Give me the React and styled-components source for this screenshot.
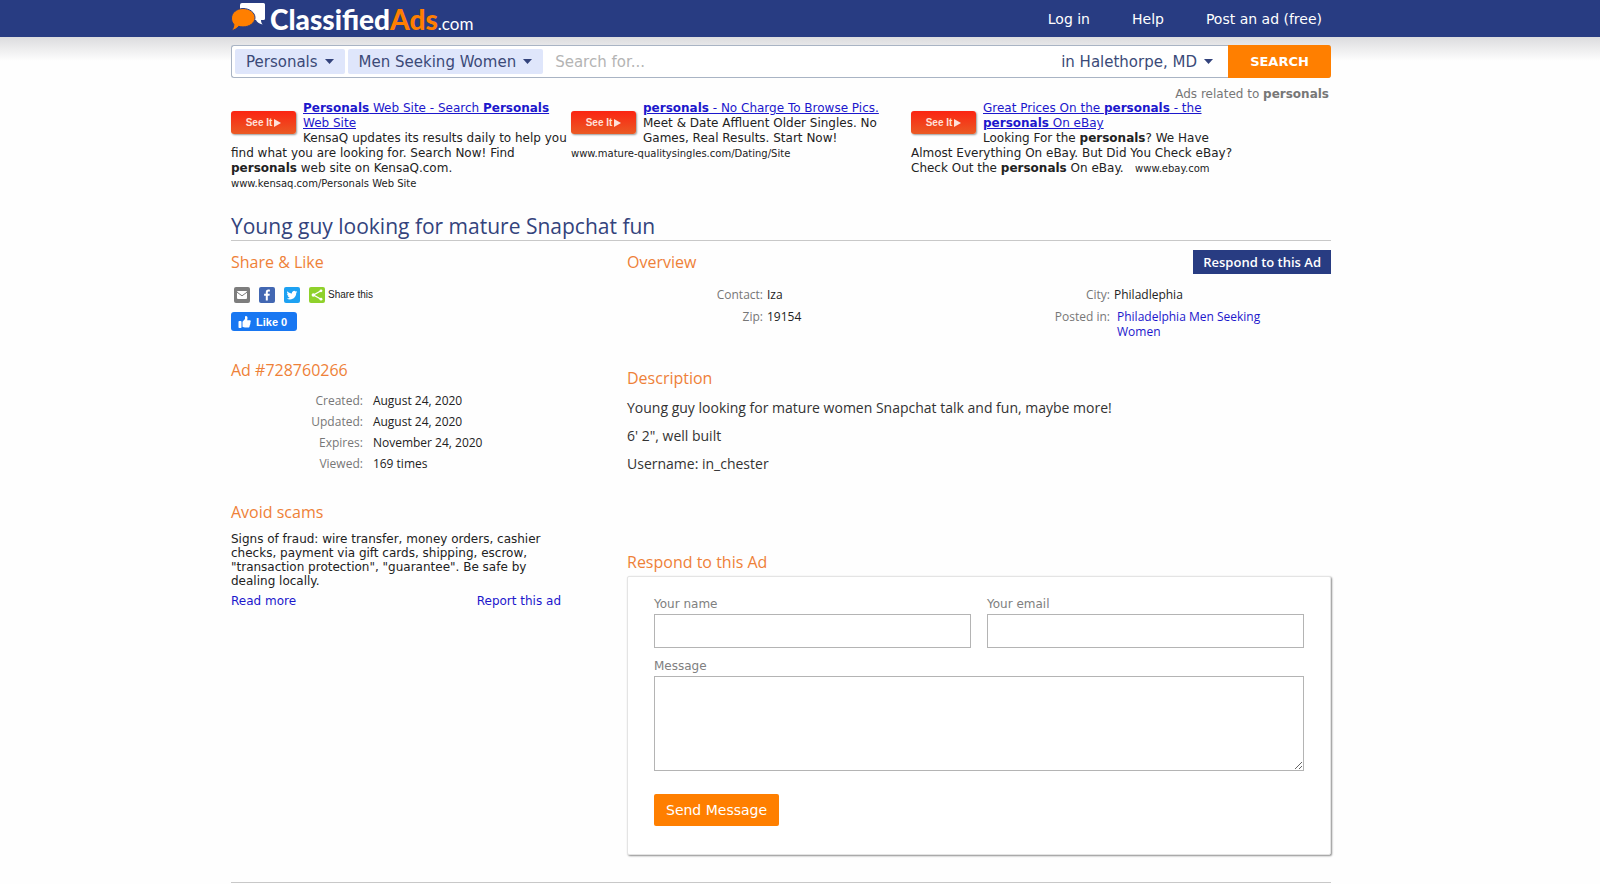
import React, { useState } from 'react';
import styled, { createGlobalStyle } from 'styled-components';

const verdana = '"DejaVu Sans", Verdana, sans-serif';
const openSans = '"Open Sans", "Noto Sans", sans-serif';

const GlobalStyle = createGlobalStyle`
  * {
    box-sizing: border-box;
  }

  body {
    margin: 0;
    background-color: #fefefe;
    color: #222222;
    font-family: ${verdana};
    font-size: 12px;
    line-height: 14px;
  }

  a {
    color: #1c17cc;
    text-decoration: none;
  }
`;

const Shell = styled.div`
  width: 100%;
  max-width: 1138px;
  margin: 0 auto;
  padding-right: 38px;
`;

const Header = styled.header`
  background-color: #283c82;
`;

const HeaderRow = styled(Shell)`
  display: flex;
  align-items: center;
  justify-content: space-between;
  height: 37px;
`;

const Logo = styled.a`
  display: flex;
  align-items: baseline;
  padding-top: 5px;
  color: #ffffff;
  font-family: Lato, sans-serif;
  font-size: 28px;
  font-weight: 900;
  line-height: 33px;

  svg {
    align-self: flex-start;
    margin-right: 4px;
  }
`;

const LogoAccent = styled.span`
  color: #ff7f00;
`;

const LogoSuffix = styled.span`
  font-size: 17px;
  font-weight: 400;
`;

const Nav = styled.nav`
  display: flex;
  gap: 42px;
  padding-right: 9px;

  a {
    color: #ffffff;
    font-size: 14px;
    line-height: 20px;
  }
`;

const SearchArea = styled.div`
  padding-top: 8px;
  background: linear-gradient(#dcdcde, #fefefe 24px);
`;

const SearchForm = styled.form`
  display: flex;
  height: 33px;
  border: 1px solid #a9b4c4;
  border-right: none;
  border-radius: 3px;
  background-color: #ffffff;
`;

const Picker = styled.label`
  position: relative;
  display: flex;
  align-items: center;
  margin: ${({ $plain }) => ($plain ? '0' : '3px 0 3px 3px')};
  border-radius: 2px;
  background-color: ${({ $plain }) => ($plain ? 'transparent' : '#dfe6fb')};

  svg {
    position: absolute;
    right: ${({ $plain }) => ($plain ? '15px' : '11px')};
    pointer-events: none;
  }
`;

const PickerSelect = styled.select`
  appearance: none;
  field-sizing: content;
  height: 100%;
  padding: 0 ${({ $plain }) => ($plain ? '31px' : '27px')} 0 11px;
  border: none;
  background: transparent;
  color: #3b4a78;
  font-family: ${verdana};
  font-size: 15px;
`;

const SearchInput = styled.input`
  flex: 1;
  min-width: 0;
  padding: 0 12px;
  border: none;
  background: transparent;
  font-family: ${verdana};
  font-size: 15px;

  &::placeholder {
    color: #b4b4b4;
  }
`;

const SearchButton = styled.button`
  width: 103px;
  margin: -1px 0;
  border: none;
  border-radius: 0 3px 3px 0;
  background-color: #ff7f00;
  color: #ffffff;
  font-family: ${verdana};
  font-size: 13px;
  font-weight: bold;
  cursor: pointer;
`;

const AdsLabel = styled.p`
  margin: 9px 2px 0 0;
  color: #777777;
  text-align: right;
`;

const AdsRow = styled.div`
  display: grid;
  grid-template-columns: repeat(3, 338fr) 80fr;
  gap: 2px;
  min-height: 111px;
`;

const SponsoredAd = styled.div`
  line-height: 15px;

  a {
    text-decoration: underline;
  }
`;

const SeeItButton = styled.button`
  float: left;
  display: flex;
  align-items: center;
  justify-content: center;
  gap: 2px;
  width: 65px;
  height: 23px;
  margin: 10px 7px 6px 0;
  padding: 0;
  border: none;
  border-radius: 3px;
  background: linear-gradient(#fb2412, #ea5a24);
  box-shadow: 1px 1px 2px rgba(0, 0, 0, 0.4);
  color: #ffe1d8;
  font-family: "Liberation Sans", Arial, sans-serif;
  font-size: 10px;
  font-weight: bold;
  cursor: pointer;
`;

const AdUrl = styled.span`
  display: inline-block;
  font-size: 10px;
  white-space: nowrap;
`;

const Title = styled.h1`
  margin: 0;
  border-bottom: 1px solid #c8c8c8;
  color: #33437c;
  font-family: ${openSans};
  font-size: 21px;
  font-weight: 400;
  line-height: 28px;
`;

const Columns = styled.main`
  display: grid;
  grid-template-columns: 30% 64%;
  justify-content: space-between;
  padding: 9px 0 27px;
  border-bottom: 1px solid #c8c8c8;
`;

const Heading = styled.h2`
  margin: 0;
  color: #ee8138;
  font-family: ${openSans};
  font-size: 16px;
  font-weight: 400;
  line-height: 24px;
`;

const HeadingRow = styled.div`
  display: flex;
  align-items: center;
  justify-content: space-between;
`;

const Section = styled.section`
  min-height: ${({ $minHeight }) => $minHeight || 0}px;
`;

const ShareRow = styled.div`
  display: flex;
  align-items: center;
  gap: 9px;
  margin: 13px 0 9px 3px;
`;

const ShareLink = styled.a`
  display: flex;
  align-items: center;
  gap: 3px;
  color: #222222;
  font-family: "Liberation Sans", Arial, sans-serif;
  font-size: 10px;
`;

const LikeButton = styled.button`
  display: flex;
  align-items: center;
  gap: 5px;
  height: 19px;
  padding: 0 10px 0 7px;
  border: none;
  border-radius: 3px;
  background-color: #1877f2;
  color: #ffffff;
  font-family: "Liberation Sans", Arial, sans-serif;
  font-size: 11px;
  font-weight: bold;
  cursor: pointer;
`;

const DetailTable = styled.table`
  width: 100%;
  margin-top: 8px;
  border-collapse: collapse;
  font-family: ${openSans};
  font-size: 12px;
  line-height: 15px;

  th,
  td {
    padding: 3px 0;
    font-weight: 400;
    text-align: left;
    vertical-align: top;
  }

  th {
    width: 43%;
    padding-right: 10px;
    color: #777777;
    text-align: right;
  }
`;

const OverviewList = styled.dl`
  display: grid;
  grid-template-columns: 136px 1fr 136px 217px;
  gap: 7px 4px;
  margin: 13px 0 0;
  font-family: ${openSans};
  font-size: 12px;
  line-height: 15px;

  dt {
    color: #777777;
    text-align: right;
  }

  dd {
    margin: 0;
  }

  dd a {
    display: block;
    max-width: 160px;
    padding-left: 3px;
  }
`;

const RespondLink = styled.a`
  padding: 2px 10px;
  background-color: #283c82;
  color: #ffffff;
  font-family: ${openSans};
  font-size: 13px;
  font-weight: 600;
  line-height: 20px;
`;

const ScamText = styled.p`
  margin: 8px 0 6px;
`;

const LinkRow = styled.div`
  display: flex;
  justify-content: space-between;
`;

const Paragraph = styled.p`
  margin: 8px 0;
  color: #333333;
  font-family: ${openSans};
  font-size: 14px;
  line-height: 20px;
`;

const MessageForm = styled.form`
  display: grid;
  grid-template-columns: 1fr 1fr;
  gap: 11px 16px;
  margin-top: 2px;
  padding: 20px 26px 28px;
  border: 1px solid #e4e4e4;
  border-radius: 2px;
  background-color: #ffffff;
  box-shadow: 1px 1px 2px rgba(0, 0, 0, 0.45);
`;

const Field = styled.label`
  display: flex;
  flex-direction: column;
  gap: 3px;
  grid-column: ${({ $wide }) => ($wide ? '1 / -1' : 'auto')};
  color: #808080;
`;

const TextInput = styled.input`
  width: 100%;
  height: 34px;
  padding: 0 8px;
  border: 1px solid #b4b4b4;
  font-family: ${verdana};
  font-size: 14px;
`;

const TextArea = styled.textarea`
  width: 100%;
  height: 95px;
  padding: 8px;
  border: 1px solid #b4b4b4;
  font-family: ${verdana};
  font-size: 14px;
  resize: vertical;
`;

const SendButton = styled.button`
  justify-self: start;
  height: 32px;
  margin-top: 12px;
  padding: 0 12px;
  border: none;
  border-radius: 2px;
  background-color: #ff7f00;
  color: #ffffff;
  font-family: ${verdana};
  font-size: 14px;
  cursor: pointer;
`;

const LogoMark = () => (
  <svg width="35" height="31" viewBox="0 0 35 31" aria-hidden="true">
    <path fill="#ffffff" d="M11 0h21.500q1.500 0 1.500 1.500v14q0 1.500-1.500 1.500H30c0 2 .5 3 1.600 4.500C28 20.500 26 19 25 17H9V2q0-2 2-2z" />
    <path fill="#ff7f00" stroke="#283c82" strokeWidth="1" d="M12 5.500c6.500 0 12 4 12 9.200s-5.500 9.200-12 9.200c-1.500 0-3-.2-4.300-.6C6 25.500 3.500 27 .500 27.500c1.600-1.700 2.400-3.800 2.300-6.200C1.200 19.700.500 17.500.500 15c0-5 5-9.500 11.500-9.500z" />
  </svg>
);

const Caret = () => (
  <svg width="9" height="5" viewBox="0 0 9 5" aria-hidden="true">
    <path fill="#33437c" d="M0 0h9L4.500 5z" />
  </svg>
);

const MailIcon = () => (
  <svg width="16" height="16" viewBox="0 0 16 16" aria-hidden="true">
    <rect width="16" height="16" rx="2" fill="#7d7d7d" />
    <rect x="3" y="4" width="10" height="8" rx="1" fill="#ffffff" />
    <path d="M3 5.200l5 3.600 5-3.600" fill="none" stroke="#7d7d7d" strokeWidth="1" />
  </svg>
);

const FacebookIcon = () => (
  <svg width="16" height="16" viewBox="0 0 16 16" aria-hidden="true">
    <rect width="16" height="16" rx="2" fill="#4267b2" />
    <path fill="#ffffff" d="M8.800 13.500V8.700h1.700l.3-2H8.800V5.500c0-.6.3-1 1.100-1h1V2.700c-.3 0-.9-.1-1.500-.1-1.600 0-2.600.9-2.600 2.600v1.500H5.100v2h1.700v4.800z" />
  </svg>
);

const TwitterIcon = () => (
  <svg width="16" height="16" viewBox="0 0 16 16" aria-hidden="true">
    <rect width="16" height="16" rx="2" fill="#1da1f2" />
    <path fill="#ffffff" d="M13.300 4.900c-.4.200-.8.300-1.200.3.400-.3.800-.7.900-1.200-.4.200-.9.400-1.400.5a2.200 2.200 0 0 0-3.700 2C6.100 6.400 4.400 5.500 3.400 4.200c-.6 1-.3 2.200.7 2.900-.4 0-.7-.1-1-.3 0 1 .7 2 1.700 2.200-.3.100-.6.100-1 0 .3.900 1.100 1.500 2.100 1.500-.9.700-2 1-3.200.9 1 .6 2.100 1 3.300 1 4.100 0 6.300-3.400 6.200-6.400.4-.3.800-.7 1.100-1.100z" />
  </svg>
);

const ShareIcon = () => (
  <svg width="16" height="16" viewBox="0 0 16 16" aria-hidden="true">
    <rect width="16" height="16" rx="2" fill="#8fd12b" />
    <path d="M12 3.800L4.500 8l7.500 4.200" fill="none" stroke="#ffffff" strokeWidth="1.300" />
    <circle cx="12" cy="3.800" r="1.400" fill="#ffffff" />
    <circle cx="4.300" cy="8" r="1.700" fill="#ffffff" />
    <circle cx="12" cy="12.200" r="1.400" fill="#ffffff" />
  </svg>
);

const ThumbIcon = () => (
  <svg width="13" height="12" viewBox="0 0 13 12" aria-hidden="true">
    <path fill="#ffffff" d="M1.300 5h1.400q.8 0 .8.800v5.400q0 .8-.8.800H1.300q-.8 0-.8-.8V5.800q0-.8.800-.8zM4.500 5.800L7 3V1.200C7 .5 7.400 0 8 0c1 0 1.600 1 1.500 2.100L9.200 4.200h2.400c1.200 0 1.600 1.400.7 2 .5.600.3 1.500-.3 1.800.4.600.1 1.400-.5 1.700.3.800-.2 1.800-1.300 1.800H7c-1 0-1.600-.2-2.500-.8z" />
  </svg>
);

const PlayIcon = () => (
  <svg width="7" height="8" viewBox="0 0 7 8" aria-hidden="true">
    <path fill="#ffe1d8" d="M0 0l7 4-7 4z" />
  </svg>
);

const adDetails = [
  ['Created:', 'August 24, 2020'],
  ['Updated:', 'August 24, 2020'],
  ['Expires:', 'November 24, 2020'],
  ['Viewed:', '169 times'],
];

const sponsoredAds = [
  {
    title: <><b>Personals</b> Web Site - Search <b>Personals</b> Web Site</>,
    text: <>KensaQ updates its results daily to help you find what you are looking for. Search Now! Find <b>personals</b> web site on KensaQ.com.</>,
    url: 'www.kensaq.com/Personals Web Site',
  },
  {
    title: <><b>personals</b> - No Charge To Browse Pics.</>,
    text: 'Meet & Date Affluent Older Singles. No Games, Real Results. Start Now!',
    url: 'www.mature-qualitysingles.com/Dating/Site',
  },
  {
    title: <>Great Prices On the <b>personals</b> - the <b>personals</b> On eBay</>,
    text: <>Looking For the <b>personals</b>? We Have Almost Everything On eBay. But Did You Check eBay? Check Out the <b>personals</b> On eBay.</>,
    url: 'www.ebay.com',
  },
];

const SearchPicker = ({ label, options, plain }) => (
  <Picker $plain={plain}>
    <PickerSelect aria-label={label} $plain={plain}>
      {options.map((option) => (
        <option key={option}>{option}</option>
      ))}
    </PickerSelect>
    <Caret />
  </Picker>
);

const App = () => {
  const [query, setQuery] = useState('');
  const [form, setForm] = useState({ name: '', email: '', message: '' });

  const handleChange = (event) => {
    setForm({ ...form, [event.target.name]: event.target.value });
  };

  const handleSubmit = (event) => {
    event.preventDefault();
  };

  return (
    <>
      <GlobalStyle />
      <Header>
        <HeaderRow>
          <Logo href="#home">
            <LogoMark />
            <span>Classified</span>
            <LogoAccent>Ads</LogoAccent>
            <LogoSuffix>.com</LogoSuffix>
          </Logo>
          <Nav>
            <a href="#login">Log in</a>
            <a href="#help">Help</a>
            <a href="#post">Post an ad (free)</a>
          </Nav>
        </HeaderRow>
      </Header>

      <SearchArea>
        <Shell>
          <SearchForm onSubmit={handleSubmit}>
            <SearchPicker label="Category" options={['Personals']} />
            <SearchPicker label="Subcategory" options={['Men Seeking Women']} />
            <SearchInput
              aria-label="Search for"
              placeholder="Search for..."
              value={query}
              onChange={(event) => setQuery(event.target.value)}
            />
            <SearchPicker label="Location" options={['in Halethorpe, MD']} plain />
            <SearchButton type="submit">SEARCH</SearchButton>
          </SearchForm>
        </Shell>
      </SearchArea>

      <Shell>
        <AdsLabel>Ads related to <b>personals</b></AdsLabel>
        <AdsRow>
          {sponsoredAds.map((ad) => (
            <SponsoredAd key={ad.url}>
              <SeeItButton type="button">See It <PlayIcon /></SeeItButton>
              <a href="#ad">{ad.title}</a>
              <br />
              {ad.text}
              &nbsp;&nbsp; <AdUrl>{ad.url}</AdUrl>
            </SponsoredAd>
          ))}
        </AdsRow>

        <Title>Young guy looking for mature Snapchat fun</Title>
        <Columns>
          <div>
            <Section $minHeight={108}>
              <Heading>Share &amp; Like</Heading>
              <ShareRow>
                <ShareLink href="#mail" aria-label="Email"><MailIcon /></ShareLink>
                <ShareLink href="#facebook" aria-label="Facebook"><FacebookIcon /></ShareLink>
                <ShareLink href="#twitter" aria-label="Twitter"><TwitterIcon /></ShareLink>
                <ShareLink href="#share"><ShareIcon />Share this</ShareLink>
              </ShareRow>
              <LikeButton type="button"><ThumbIcon />Like 0</LikeButton>
            </Section>

            <Section $minHeight={142}>
              <Heading>Ad #728760266</Heading>
              <DetailTable>
                <tbody>
                  {adDetails.map(([label, value]) => (
                    <tr key={label}>
                      <th scope="row">{label}</th>
                      <td>{value}</td>
                    </tr>
                  ))}
                </tbody>
              </DetailTable>
            </Section>

            <Section>
              <Heading>Avoid scams</Heading>
              <ScamText>
                Signs of fraud: wire transfer, money orders, cashier checks, payment via gift cards, shipping, escrow, "transaction protection", "guarantee". Be safe by dealing locally.
              </ScamText>
              <LinkRow>
                <a href="#more">Read more</a>
                <a href="#report">Report this ad</a>
              </LinkRow>
            </Section>
          </div>

          <div>
            <Section $minHeight={116}>
              <HeadingRow>
                <Heading>Overview</Heading>
                <RespondLink href="#respond">Respond to this Ad</RespondLink>
              </HeadingRow>
              <OverviewList>
                <dt>Contact:</dt>
                <dd>Iza</dd>
                <dt>City:</dt>
                <dd>Philadlephia</dd>
                <dt>Zip:</dt>
                <dd>19154</dd>
                <dt>Posted in:</dt>
                <dd><a href="#category">Philadelphia Men Seeking Women</a></dd>
              </OverviewList>
            </Section>

            <Section $minHeight={184}>
              <Heading>Description</Heading>
              <Paragraph>Young guy looking for mature women Snapchat talk and fun, maybe more!</Paragraph>
              <Paragraph>6' 2", well built</Paragraph>
              <Paragraph>Username: in_chester</Paragraph>
            </Section>

            <Section id="respond">
              <Heading>Respond to this Ad</Heading>
              <MessageForm onSubmit={handleSubmit}>
                <Field>
                  Your name
                  <TextInput name="name" value={form.name} onChange={handleChange} />
                </Field>
                <Field>
                  Your email
                  <TextInput name="email" type="email" value={form.email} onChange={handleChange} />
                </Field>
                <Field $wide>
                  Message
                  <TextArea name="message" value={form.message} onChange={handleChange} />
                </Field>
                <SendButton type="submit">Send Message</SendButton>
              </MessageForm>
            </Section>
          </div>
        </Columns>
      </Shell>
    </>
  );
};

export default App;
